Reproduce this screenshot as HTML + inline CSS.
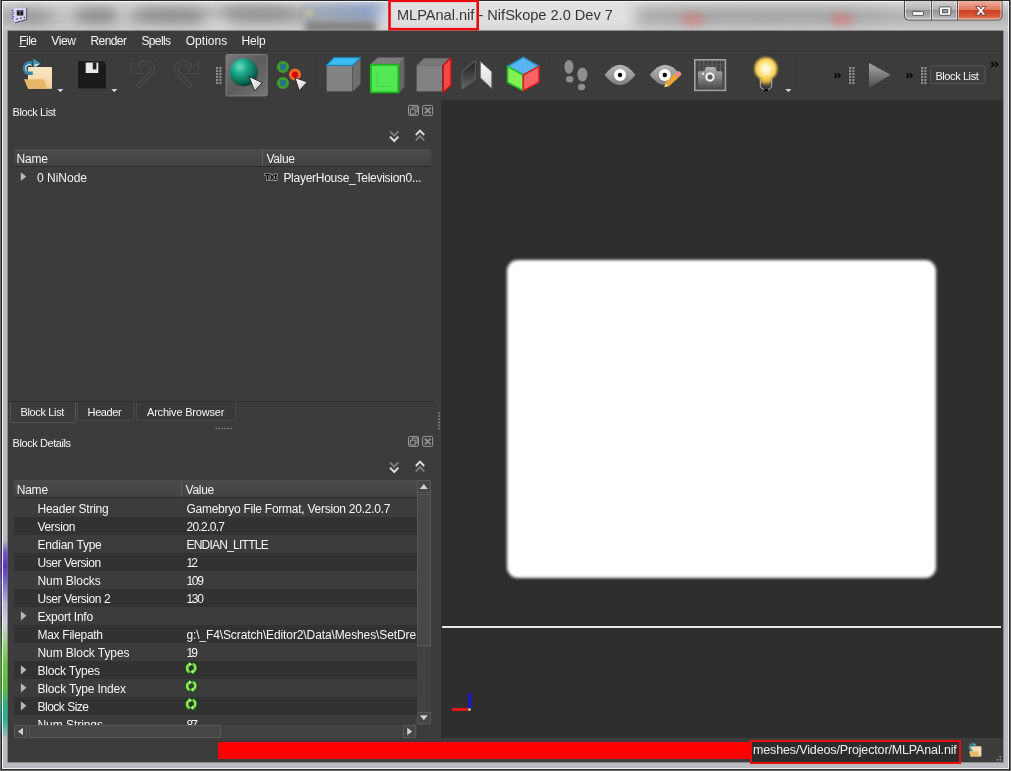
<!DOCTYPE html>
<html><head><meta charset="utf-8"><title>NifSkope</title>
<style>
html,body{margin:0;padding:0}
html{background:#6e6e6e}
body{width:1011px;height:771px;position:relative;overflow:hidden;background:#6e6e6e;font-family:"Liberation Sans",sans-serif}
.a{position:absolute}
.t{position:absolute;white-space:pre;line-height:1;font-family:"Liberation Sans",sans-serif}
.t u{text-decoration:underline;text-underline-offset:1px}
#ring1{left:1px;top:0;width:1009px;height:770.3px;background:#2a2a2a}
#ring2{left:2px;top:1px;width:1007px;height:768px;background:#f2f2f2}
#frame{left:3px;top:2px;width:1005px;height:766px;background:#babbbe;overflow:hidden}
#titlegrad{left:0;top:0;width:1005px;height:29px;background:linear-gradient(#dadada 0,#c6c6c6 18%,#b4b4b4 45%,#b8b8b8 65%,#c8c8c8 90%,#c4c4c4 100%)}
.blob{position:absolute;border-radius:50%;filter:blur(6px)}
#client{left:8px;top:30.7px;width:994.6px;height:731.6px;background:#3c3c3c;box-shadow:0 0 0 .6px #6a6a70}
#menubar{left:8px;top:31px;width:994.6px;height:19px;background:#3c3c3c}
#viewport{left:441px;top:100px;width:561.6px;height:638px;background:#2e2e2e}
.hdr{position:absolute;height:18px;background:linear-gradient(#4b4b4b,#434343);border-bottom:1px solid #2c2c2c;box-sizing:border-box}
.row{position:absolute;left:14px;width:403px;height:18px}
.dk{background:#323232}
.tab{position:absolute;box-sizing:border-box;border:1px solid #4b4b4b;border-top:none;border-radius:0 0 3px 3px;background:#393939}
.sb{position:absolute;background:#454545;box-sizing:border-box;border:1px solid #585858}
</style></head><body>
<div id="ring1" class="a"></div><div id="ring2" class="a"></div>
<div id="frame" class="a">
  <div id="titlegrad" class="a"></div>
  <div class="a" style="left:-2px;top:-1px;width:1009px;height:31px;overflow:hidden">
  
  <div class="blob" style="left:8px;top:6px;width:40px;height:20px;background:rgba(120,120,120,.35)"></div>
  <div class="blob" style="left:76px;top:6px;width:40px;height:16px;background:rgba(100,100,100,.45)"></div>
  <div class="blob" style="left:132px;top:5px;width:75px;height:17px;background:rgba(100,100,100,.42)"></div>
  <div class="blob" style="left:218px;top:3px;width:80px;height:16px;background:rgba(100,100,100,.42)"></div>
  <div class="blob" style="left:54px;top:8px;width:18px;height:14px;background:rgba(255,255,255,.3)"></div>
  <div class="blob" style="left:114px;top:8px;width:16px;height:14px;background:rgba(255,255,255,.3)"></div>
  <div class="blob" style="left:200px;top:14px;width:30px;height:16px;background:rgba(255,255,255,.3)"></div>
  <div class="blob" style="left:298px;top:1px;width:88px;height:18px;border-radius:6px;background:linear-gradient(to right,rgba(130,140,165,.35),rgba(100,140,212,.6));filter:blur(5px)"></div>
  <div class="blob" style="left:304px;top:21px;width:72px;height:10px;border-radius:4px;background:rgba(95,95,95,.7);filter:blur(3px)"></div>
  <div class="blob" style="left:304px;top:9px;width:8px;height:6px;background:rgba(220,215,140,.6);filter:blur(2px)"></div>
  <div class="blob" style="left:376px;top:2px;width:260px;height:26px;border-radius:13px;background:rgba(255,255,255,.62);filter:blur(7px)"></div>
  <div class="blob" style="left:640px;top:6px;width:250px;height:16px;background:rgba(110,110,110,.25);filter:blur(8px)"></div>
  <div class="blob" style="left:680px;top:13px;width:24px;height:11px;background:rgba(235,90,90,.5);filter:blur(5px)"></div>
  <div class="blob" style="left:829px;top:13px;width:24px;height:11px;background:rgba(235,90,90,.5);filter:blur(5px)"></div>
  </div>

</div>
<div class="a" style="left:3px;top:540px;width:5px;height:200px;background:linear-gradient(to bottom,rgba(189,189,193,0) 0,#7a5ad0 6%,#5a38c0 13%,#7860cc 20%,#b8b4dc 32%,#c8d0dc 42%,#a8d090 50%,#68c840 62%,#58c038 74%,#30b080 82%,#28b098 90%,rgba(189,189,193,0) 100%)"></div>
<div class="a" style="left:0;top:545px;width:2px;height:190px;opacity:.55;background:linear-gradient(to bottom,rgba(60,60,60,0) 0,#5a38c0 13%,#7860cc 20%,rgba(90,90,90,.3) 40%,#58c038 62%,#58c038 74%,#28b098 88%,rgba(60,60,60,0) 100%)"></div>
<div id="client" class="a"></div>
<div id="menubar" class="a"></div>
<div id="viewport" class="a"></div>

<!-- toolbar/menu separator -->
<div class="a" style="left:8px;top:50px;width:994.6px;height:1px;background:#363636"></div><div class="a" style="left:8px;top:54px;width:994.6px;height:1px;background:#393939"></div>
<!-- dock 1: Block List -->
<div class="hdr" style="left:14px;top:149px;width:417px"></div>
<div class="a" style="left:262px;top:149px;width:1px;height:17px;background:#5a5a5a"></div>
<!-- tab pane line -->
<div class="a" style="left:8px;top:401px;width:427px;height:1px;background:#2d2d2d"></div>
<div class="tab" style="left:10px;top:402px;width:65.5px;height:21px;background:#3c3c3c;border-color:#565656"></div>
<div class="tab" style="left:77px;top:402px;width:57px;height:18.5px"></div>
<div class="tab" style="left:136px;top:402px;width:100px;height:18.5px"></div>
<!-- dock 2 header -->
<div class="hdr" style="left:14px;top:480px;width:402.5px"></div>
<div class="a" style="left:181px;top:480px;width:1px;height:17px;background:#5a5a5a"></div>
<!-- rows -->
<div class="row dk" style="top:516.7px;height:18px;width:402.5px"></div>
<div class="row dk" style="top:552.7px;height:18px;width:402.5px"></div>
<div class="row dk" style="top:588.7px;height:18px;width:402.5px"></div>
<div class="row dk" style="top:624.7px;height:18px;width:402.5px"></div>
<div class="row dk" style="top:660.7px;height:18px;width:402.5px"></div>
<div class="row dk" style="top:696.7px;height:18px;width:402.5px"></div>
<!-- v scrollbar -->
<div class="a" style="left:417px;top:480px;width:13.5px;height:245px;background:#424242"></div>
<div class="sb" style="left:417px;top:480px;width:13.5px;height:13px"></div>
<div class="sb" style="left:417px;top:494px;width:13.5px;height:151.5px;background:#474747"></div>
<div class="sb" style="left:417px;top:711.5px;width:13.5px;height:12.5px"></div>
<!-- h scrollbar -->
<div class="a" style="left:14px;top:725px;width:402.5px;height:13px;background:#424242"></div>
<div class="sb" style="left:14px;top:725px;width:12.7px;height:13px"></div>
<div class="sb" style="left:28.6px;top:725px;width:192.6px;height:13px;background:#474747"></div>
<div class="sb" style="left:403px;top:725px;width:13px;height:13px"></div>
<!-- viewport contents -->
<div class="a" style="left:507.3px;top:259.8px;width:428.7px;height:318px;border-radius:11px;background:#fff;filter:blur(1.65px)"></div>
<div class="a" style="left:510.5px;top:263px;width:422.5px;height:311.5px;border-radius:8px;background:#fff"></div>
<div class="a" style="left:441.5px;top:626px;width:559.5px;height:2px;background:#e6e6e6"></div>
<div class="a" style="left:452px;top:708.3px;width:17.5px;height:2.6px;background:#e01818"></div>
<div class="a" style="left:468px;top:692.8px;width:3px;height:17px;background:#1818d8"></div>
<div class="a" style="left:468px;top:708px;width:3px;height:3px;border-radius:50%;background:#b8c850"></div>
<!-- status bar -->
<div class="a" style="left:217.7px;top:741.7px;width:534px;height:16.9px;background:#fe0000"></div>
<div class="a" style="left:749.5px;top:740.3px;width:211.8px;height:23.4px;box-sizing:border-box;border:2.6px solid #e80c0c;background:#2c2c2c"></div>

<!--BODY-->
<div class="a" style="left:0;top:0;width:416.5px;height:725px;overflow:hidden;will-change:transform;opacity:.999">
<span class="t" style="left:37.5px;top:503.1px;font-size:12px;letter-spacing:-0.237px;color:#f6f6f6;">Header String</span>
<span class="t" style="left:186.4px;top:503.1px;font-size:12px;letter-spacing:-0.255px;color:#f6f6f6;">Gamebryo File Format, Version 20.2.0.7</span>
<span class="t" style="left:37.5px;top:521.1px;font-size:12px;letter-spacing:-0.339px;color:#f6f6f6;">Version</span>
<span class="t" style="left:186.4px;top:521.1px;font-size:12px;letter-spacing:-0.682px;color:#f6f6f6;">20.2.0.7</span>
<span class="t" style="left:37.5px;top:539.1px;font-size:12px;letter-spacing:-0.220px;color:#f6f6f6;">Endian Type</span>
<span class="t" style="left:186.4px;top:539.1px;font-size:12px;letter-spacing:-0.755px;color:#f6f6f6;">ENDIAN_LITTLE</span>
<span class="t" style="left:37.5px;top:557.1px;font-size:12px;letter-spacing:-0.455px;color:#f6f6f6;">User Version</span>
<span class="t" style="left:186.4px;top:557.1px;font-size:12px;letter-spacing:-1.759px;color:#f6f6f6;">12</span>
<span class="t" style="left:37.5px;top:575.1px;font-size:12px;letter-spacing:-0.080px;color:#f6f6f6;">Num Blocks</span>
<span class="t" style="left:186.4px;top:575.1px;font-size:12px;letter-spacing:-1.266px;color:#f6f6f6;">109</span>
<span class="t" style="left:37.5px;top:593.1px;font-size:12px;letter-spacing:-0.423px;color:#f6f6f6;">User Version 2</span>
<span class="t" style="left:186.4px;top:593.1px;font-size:12px;letter-spacing:-1.266px;color:#f6f6f6;">130</span>
<span class="t" style="left:37.5px;top:611.1px;font-size:12px;letter-spacing:-0.243px;color:#f6f6f6;">Export Info</span>
<span class="t" style="left:37.5px;top:629.1px;font-size:12px;letter-spacing:-0.291px;color:#f6f6f6;">Max Filepath</span>
<span class="t" style="left:186.4px;top:629.1px;font-size:12px;letter-spacing:-0.110px;color:#f6f6f6;">g:\_F4\Scratch\Editor2\Data\Meshes\SetDre</span>
<span class="t" style="left:37.5px;top:647.1px;font-size:12px;letter-spacing:-0.083px;color:#f6f6f6;">Num Block Types</span>
<span class="t" style="left:186.4px;top:647.1px;font-size:12px;letter-spacing:-1.759px;color:#f6f6f6;">19</span>
<span class="t" style="left:37.5px;top:665.1px;font-size:12px;letter-spacing:-0.208px;color:#f6f6f6;">Block Types</span>
<span class="t" style="left:37.5px;top:683.1px;font-size:12px;letter-spacing:-0.171px;color:#f6f6f6;">Block Type Index</span>
<span class="t" style="left:37.5px;top:701.1px;font-size:12px;letter-spacing:-0.503px;color:#f6f6f6;">Block Size</span>
<span class="t" style="left:37.5px;top:719.1px;font-size:12px;letter-spacing:-0.053px;color:#f6f6f6;">Num Strings</span>
<span class="t" style="left:186.4px;top:719.1px;font-size:12px;letter-spacing:-1.759px;color:#f6f6f6;">87</span>
</div>
<svg class="a" style="left:0;top:0" width="1011" height="771" viewBox="0 0 1011 771">
<defs>
  <linearGradient id="gFolderBack" x1="0" y1="0" x2="0" y2="1"><stop offset="0" stop-color="#fbe6c4"/><stop offset="1" stop-color="#f4d3a0"/></linearGradient>
  <radialGradient id="gSphere" cx="0.36" cy="0.3" r="0.75"><stop offset="0" stop-color="#6adcbc"/><stop offset="0.35" stop-color="#1aaa8a"/><stop offset="0.75" stop-color="#0c6a55"/><stop offset="1" stop-color="#053a2e"/></radialGradient>
  <linearGradient id="gBtn" x1="0" y1="0" x2="1" y2="1"><stop offset="0" stop-color="#7a7a7a"/><stop offset="0.5" stop-color="#5c5c5c"/><stop offset="1" stop-color="#767676"/></linearGradient>
  <linearGradient id="gCur" x1="0" y1="0" x2="1" y2="1"><stop offset="0" stop-color="#ffffff"/><stop offset="1" stop-color="#c8c8c8"/></linearGradient>
  <linearGradient id="gDarkPane" x1="0" y1="0" x2="0" y2="1"><stop offset="0" stop-color="#1c1c1c"/><stop offset="1" stop-color="#666"/></linearGradient>
  <linearGradient id="gLightPane" x1="0" y1="0" x2="0" y2="1"><stop offset="0" stop-color="#ffffff"/><stop offset="1" stop-color="#d0d0d0"/></linearGradient>
  <linearGradient id="gEye" x1="0" y1="0" x2="0" y2="1"><stop offset="0" stop-color="#b8b8b8"/><stop offset="1" stop-color="#7e7e7e"/></linearGradient>
  <linearGradient id="gCam" x1="0" y1="0" x2="0" y2="1"><stop offset="0" stop-color="#b4b4b4"/><stop offset="1" stop-color="#4e4e4e"/></linearGradient>
  <linearGradient id="gPlay" x1="0" y1="0" x2="0" y2="1"><stop offset="0" stop-color="#a8a8a8"/><stop offset="1" stop-color="#4c4c4c"/></linearGradient>
  <radialGradient id="gBulb" cx="0.5" cy="0.5" r="0.5"><stop offset="0" stop-color="#ffffff"/><stop offset="0.3" stop-color="#fff4cc"/><stop offset="0.62" stop-color="#fee07a"/><stop offset="0.88" stop-color="#f9cc4e"/><stop offset="1" stop-color="#e4ac28" stop-opacity="0.75"/></radialGradient>
  <linearGradient id="gNeck" x1="0" y1="0" x2="0" y2="1"><stop offset="0" stop-color="#fdd560"/><stop offset="0.55" stop-color="#f6c64a"/><stop offset="1" stop-color="#8a7a40" stop-opacity="0.2"/></linearGradient>
  <filter id="b3" x="-20%" y="-20%" width="140%" height="140%"><feGaussianBlur stdDeviation="0.9"/></filter>
  <linearGradient id="gMin" x1="0" y1="0" x2="0" y2="1"><stop offset="0" stop-color="#d2d2d4"/><stop offset="0.45" stop-color="#b2b2b5"/><stop offset="0.5" stop-color="#939396"/><stop offset="1" stop-color="#bebec1"/></linearGradient>
  <linearGradient id="gClose" x1="0" y1="0" x2="0" y2="1"><stop offset="0" stop-color="#eeb0a0"/><stop offset="0.45" stop-color="#e07860"/><stop offset="0.5" stop-color="#cc4028"/><stop offset="0.8" stop-color="#d85a38"/><stop offset="1" stop-color="#e88a68"/></linearGradient>
  <filter id="b1"><feGaussianBlur stdDeviation="0.5"/></filter>
  <filter id="b2"><feGaussianBlur stdDeviation="0.35"/></filter>
<g id="grip"><rect x="0" y="0" width="2.2" height="2.2"/><rect x="3.3" y="0" width="2.2" height="2.2"/><rect x="0" y="3" width="2.2" height="2.2"/><rect x="3.3" y="3" width="2.2" height="2.2"/><rect x="0" y="6" width="2.2" height="2.2"/><rect x="3.3" y="6" width="2.2" height="2.2"/><rect x="0" y="9" width="2.2" height="2.2"/><rect x="3.3" y="9" width="2.2" height="2.2"/><rect x="0" y="12" width="2.2" height="2.2"/><rect x="3.3" y="12" width="2.2" height="2.2"/><rect x="0" y="15" width="2.2" height="2.2"/><rect x="3.3" y="15" width="2.2" height="2.2"/></g>
</defs>

<!-- ============ toolbar: file group ============ -->
<g id="ic-open">
  <path d="M28 67 h23 a1 1 0 0 1 1 1 V87.8 a1 1 0 0 1 -1 1 H28z" fill="url(#gFolderBack)"/>
  <path d="M24 79.2 H43.7 L47.6 88.8 H28z" fill="#e8b566"/>
  <path d="M43.7 79.2 L47.6 88.8 H51 a1 1 0 0 0 1-1 L47.4 79.2z" fill="#f3cf98" opacity=".6"/>
  <path d="M32 63.2 A5.4 5.4 0 1 0 28.2 73.3 H32.8" fill="none" stroke="#3486a4" stroke-width="3.4"/>
  <path d="M31.6 65.6 A3.2 3.2 0 0 0 27 71" fill="none" stroke="#c4e6f2" stroke-width="1.3"/>
  <path d="M33 58.6 L40.8 63.4 L33.6 67.6z" fill="#3f98b8"/>
  <path d="M34.4 64.6 L40 63.8 L35 67z" fill="#d8eef6"/>
</g>
<path d="M57.3 89 h6 l-3 3.2z" fill="#d6d6d6"/>
<g id="ic-save">
  <path d="M78 61 H103.5 L106 63.5 V88.6 H78z" fill="#1b1b1b"/>
  <rect x="85.7" y="62.6" width="12.6" height="10.4" fill="#e9e9e9"/>
  <rect x="92.8" y="62.6" width="3.6" height="6.8" fill="#1b1b1b"/>
</g>
<path d="M111.3 89 h6 l-3 3.2z" fill="#d6d6d6"/>
<!-- undo / redo (disabled, faint) -->
<g id="ic-undo" fill="none" stroke-linecap="round" stroke-linejoin="round">
  <g id="undo1">
  <path d="M139 85.6 L150.8 73.6 A6.7 6.7 0 1 0 139.4 68.4" stroke="#4e4e4e" stroke-width="4.6"/>
  <path d="M131.2 62.2 V73.6 H142.6z" fill="#3c3c3c" stroke="#4e4e4e" stroke-width="1"/>
  <path d="M139 85.6 L150.8 73.6 A6.7 6.7 0 1 0 139.4 68.4 L138 69.6" stroke="#3c3c3c" stroke-width="2.6"/>
  </g>
  <use href="#undo1" transform="translate(329.3,0) scale(-1,1)"/>
</g>
<!-- grips -->

<use href="#grip" x="216" y="67" fill="#8c8c8c"/>
<use href="#grip" x="849" y="67" fill="#8c8c8c"/>
<use href="#grip" x="921" y="67" fill="#8c8c8c"/>
<!-- selected sphere button -->
<rect x="226" y="54.5" width="41.2" height="41.5" rx="1.5" fill="url(#gBtn)" stroke="#8a8a8a" stroke-width="0.8"/>
<circle cx="243.8" cy="72.3" r="14" fill="url(#gSphere)"/>
<path d="M249 76.5 L262.3 82.6 L254.6 91z" fill="url(#gCur)" stroke="#2a2a2a" stroke-width="1" stroke-linejoin="round"/>
<!-- vertices select -->
<g>
  <circle cx="283" cy="67" r="4.6" fill="#24728e" stroke="#409f2c" stroke-width="2.8"/>
  <circle cx="283" cy="83" r="4.6" fill="#24728e" stroke="#409f2c" stroke-width="2.8"/>
  <circle cx="295" cy="74.6" r="4.6" fill="#d80808" stroke="#f06a20" stroke-width="2.8"/>
  <path d="M295 77.7 L307.4 81.9 L299.2 90.8z" fill="url(#gCur)" stroke="#2a2a2a" stroke-width="1" stroke-linejoin="round"/>
</g>
<!-- separators -->
<g stroke="#383838" stroke-width="1"><path d="M317.5 58V92M550.5 58V92M737.5 58V92M797.5 58V92"/></g>
<g stroke="#3f3f3f" stroke-width="1"><path d="M318.5 58V92M551.5 58V92M738.5 58V92M798.5 58V92"/></g>
<!-- cube top -->
<g>
  <path d="M326.6 65.8 H352.3 V91.4 H326.6z" fill="#828282"/>
  <path d="M352.8 65.8 L360.5 58 V84 L352.8 91.4z" fill="#6e6e6e"/>
  <path d="M326.4 65.4 L334 57.6 H360.6 L352.6 65.4z" fill="#3cbcf4" stroke="#1a86b8" stroke-width="1.2" stroke-linejoin="round"/>
</g>
<!-- cube front -->
<g>
  <path d="M370.5 64 L378 57.6 H404.4 L399 64z" fill="#7c7c7c"/>
  <path d="M399 64 L404.4 57.6 V86.8 L399 93z" fill="#666"/>
  <rect x="370.8" y="64.8" width="27.6" height="27.6" fill="#52e852" stroke="#1bb41b" stroke-width="1.8"/>
  <path d="M377 71 V86.5 H392.5" fill="none" stroke="#46d846" stroke-width="1"/>
</g>
<!-- cube side -->
<g>
  <path d="M416.6 65.4 H442.2 V91.4 H416.6z" fill="#828282"/>
  <path d="M416.6 65.4 L424 58.2 H449.6 L442.2 65.4z" fill="#787878"/>
  <path d="M443.2 65.6 L451 57.8 V85 L443.2 92.4z" fill="#f24848" stroke="#c41414" stroke-width="1.4" stroke-linejoin="round"/>
</g>
<!-- flip normals -->
<g>
  <path d="M462 71.3 L475.3 60.8 V79.3 L462 89.3z" fill="url(#gDarkPane)" stroke="#5c5c5c" stroke-width="1.2" stroke-linejoin="round"/>
  <path d="M480.3 61.3 L491.8 71.8 V88.7 L480.3 77.8z" fill="url(#gLightPane)" stroke="#6a6a6a" stroke-width="1" stroke-linejoin="round"/>
</g>
<!-- rgb cube -->
<g stroke-linejoin="round" stroke-width="1.6">
  <path d="M523.3 57.4 L539 66.4 L523.3 75 L507.6 66.4z" fill="#58b4f2" stroke="#2490c4"/>
  <path d="M507.6 66.4 L523.3 75 V90.6 L507.6 82.3z" fill="#84f054" stroke="#22c222"/>
  <path d="M539 66.4 L523.3 75 V90.6 L539 82.3z" fill="#f86262" stroke="#d22020"/>
</g>
</svg>

<svg class="a" style="left:0;top:0" width="1011" height="771" viewBox="0 0 1011 771">
<!-- footsteps -->
<g fill="#8e8e8e">
  <ellipse cx="568.9" cy="66.8" rx="4.5" ry="6.9"/>
  <ellipse cx="569.7" cy="79.2" rx="3.7" ry="3.3"/>
  <ellipse cx="582.4" cy="74.5" rx="5" ry="6.9"/>
  <ellipse cx="581.6" cy="87" rx="3.6" ry="3.3"/>
</g>
<!-- eye 1 -->
<g>
  <path d="M604.6 75 Q620 54.5 635.4 75 Q620 95 604.6 75z" fill="url(#gEye)"/>
  <circle cx="620" cy="75" r="6" fill="#fff"/><circle cx="620" cy="75" r="2.2" fill="#050505"/>
</g>
<!-- eye 2 with pencil -->
<g>
  <path d="M649.8 75 Q665 54.5 680.4 75 Q665 95 649.8 75z" fill="url(#gEye)"/>
  <circle cx="664.8" cy="75" r="6" fill="#fff"/><circle cx="664.8" cy="75" r="2.2" fill="#050505"/>
  <g transform="translate(664.3,87.3) rotate(-43)">
    <path d="M0 0 L4.2 -2.5 V2.5z" fill="#f2d66a"/>
    <rect x="4.2" y="-2.5" width="13.2" height="5" fill="#f2a32e"/>
    <path d="M17.4 -2.5 h3 a1.6 1.6 0 0 1 1.6 1.6 v1.8 a1.6 1.6 0 0 1 -1.6 1.6 h-3z" fill="#f38a9a"/>
  </g>
</g>
<!-- camera/screenshot -->
<g>
  <rect x="694.8" y="59.8" width="30.6" height="30.6" fill="#454545" stroke="#a2a2a2" stroke-width="1.6"/>
  <g stroke="#5e5e5e" stroke-width="1.2"><path d="M699.5 61V90M703.7 61V90M707.9 61V90M712.1 61V90M716.3 61V90M720.5 61V90"/><path d="M696 65H725M696 86H725" stroke="#555"/></g>
  <path d="M698 72.2 a1 1 0 0 1 1 -1 H704.4 L705.6 67.8 a1 1 0 0 1 1 -.8 h7.8 a1 1 0 0 1 1 .8 L716.6 71.2 H721.4 a1 1 0 0 1 1 1 V88.5 H698z" fill="url(#gCam)"/>
  <circle cx="710" cy="77" r="3.7" fill="none" stroke="#fff" stroke-width="1.8"/>
  <rect x="708.2" y="75.2" width="3.6" height="3.6" fill="#555"/>
  <rect x="702.2" y="72.8" width="1.8" height="1.8" fill="#fff"/>
</g>
<!-- bulb -->
<g>
  <g filter="url(#b3)">
    <path d="M760.8 75 V83.5 Q766 88.5 771.2 83.5 V75z" fill="url(#gNeck)"/>
    <circle cx="765.9" cy="68.8" r="11.7" fill="url(#gBulb)"/>
  </g>
  <path d="M760.3 79 V85.6 Q760.5 88.6 763.8 89.6 M771.7 79 V85.6 Q771.5 88.6 768.2 89.6" fill="none" stroke="#c2c2c2" stroke-width="0.9"/>
  <rect x="764" y="89" width="4" height="2.2" fill="#050505"/>
</g>
<path d="M785.4 89 h6 l-3 3.2z" fill="#d6d6d6"/>
<!-- chevrons >> -->
<g fill="none" stroke="#0a0a0a" stroke-width="1.5">
  <path d="M834.6 73.2 L837 75.4 L834.6 77.6M838 73.2 L840.4 75.4 L838 77.6"/>
  <path d="M906.6 73.2 L909 75.4 L906.6 77.6M910 73.2 L912.4 75.4 L910 77.6"/>
  <path d="M991 61.8 L993.8 64.4 L991 67M995 61.8 L997.8 64.4 L995 67" stroke-width="1.6"/>
</g>
<!-- play -->
<path d="M869 63 L890.7 74.8 L869 87.9z" fill="url(#gPlay)"/>
<!-- Block List toolbar button -->
<rect x="930.5" y="65.8" width="54.5" height="17.8" rx="2.5" fill="#3e3e3e" stroke="#5a5a5a" stroke-width="1"/>

<!-- dock float/close buttons -->
<g id="dockbtns" fill="none" stroke="#9a9a9a" stroke-width="1">
  <rect x="408.5" y="105.4" width="10" height="10" rx="1.5"/>
  <rect x="412.4" y="107" width="4.8" height="4.8"/>
  <rect x="410.4" y="109.2" width="4.8" height="4.8" fill="#3c3c3c"/>
  <rect x="422.6" y="105.4" width="10" height="10" rx="1.5"/>
  <path d="M424.8 107.6 L430.6 113.4M430.6 107.6 L424.8 113.4" stroke-width="2" stroke="#909090"/>
</g>
<use href="#dockbtns" y="331"/>
<!-- double chevrons -->
<g id="chev" fill="none" stroke-linejoin="miter" stroke-width="2">
  <path d="M390 131.4 L394.2 135.6 L398.4 131.4" stroke="#7c7c7c"/>
  <path d="M390 136.6 L394.2 141 L398.4 136.6" stroke="#dcdcdc"/>
  <path d="M415.8 135 L420 130.6 L424.2 135" stroke="#dcdcdc"/>
  <path d="M415.8 140.4 L420 136 L424.2 140.4" stroke="#7c7c7c"/>
</g>
<use href="#chev" y="331"/>
<!-- tree arrows -->
<g fill="#b9b9b9">
  <path d="M20.8 172.2 L26.2 176.6 L20.8 181z"/>
  <path id="arr" d="M20.9 0 L26.4 4.6 L20.9 9.2z" transform="translate(0,611.2)"/>
  <path d="M20.9 0 L26.4 4.6 L20.9 9.2z" transform="translate(0,665.2)"/>
  <path d="M20.9 0 L26.4 4.6 L20.9 9.2z" transform="translate(0,683.2)"/>
  <path d="M20.9 0 L26.4 4.6 L20.9 9.2z" transform="translate(0,701.2)"/>
</g>
<!-- Txt icon -->
<g font-family="Liberation Sans, sans-serif" font-weight="bold" font-size="9px" letter-spacing="-0.5">
  <text x="264.8" y="179.8" stroke="#c8c8c8" stroke-width="1.5" stroke-linejoin="round" fill="#c8c8c8">Txt</text>
  <text x="264.8" y="179.8" fill="#050505" stroke="#050505" stroke-width=".3">Txt</text>
</g>
<!-- green refresh icons -->
<defs>
<g id="refresh">
  <g id="rfh">
    <path d="M5.7 2.9 A3.5 3.9 0 0 0 5.3 10.6" fill="none" stroke="#0e560e" stroke-width="4.2"/>
    <path d="M3.6 -0.4 L8.6 2.9 L4.2 6.2z" fill="#0e560e"/>
    <path d="M5.7 2.9 A3.5 3.9 0 0 0 5.3 10.6" fill="none" stroke="#7ad84a" stroke-width="2.6"/>
    <path d="M4.3 0.7 L7.6 2.9 L4.7 5.2z" fill="#b4f48c"/>
    <path d="M3.2 4.2 A3.4 3.8 0 0 0 3.2 9" fill="none" stroke="#a4ec78" stroke-width="1.1"/>
  </g>
  <use href="#rfh" transform="rotate(180 6.6 6.6)"/>
</g>
</defs>
<use href="#refresh" x="184.6" y="661.4"/>
<use href="#refresh" x="184.6" y="679.4"/>
<use href="#refresh" x="184.6" y="697.4"/>
<!-- scrollbar arrows -->
<g fill="#cfcfcf">
  <path d="M419.8 489 L423.8 484 L427.8 489z"/>
  <path d="M419.8 715.2 L423.8 720.2 L427.8 715.2z"/>
  <path d="M23 727.8 L18 731.5 L23 735.2z"/>
  <path d="M407.2 727.8 L412.2 731.5 L407.2 735.2z"/>
</g>
<!-- splitter dots -->
<g fill="#8a8a8a">
  <rect x="215.4" y="427.8" width="1.6" height="1.3"/><rect x="218.4" y="427.8" width="1.6" height="1.3"/><rect x="221.4" y="427.8" width="1.6" height="1.3"/><rect x="224.4" y="427.8" width="1.6" height="1.3"/><rect x="227.4" y="427.8" width="1.6" height="1.3"/><rect x="230.4" y="427.8" width="1.6" height="1.3"/>
  <rect x="438.2" y="412.2" width="1.6" height="1.6"/><rect x="438.2" y="415.3" width="1.6" height="1.6"/><rect x="438.2" y="418.4" width="1.6" height="1.6"/><rect x="438.2" y="421.5" width="1.6" height="1.6"/><rect x="438.2" y="424.6" width="1.6" height="1.6"/><rect x="438.2" y="427.7" width="1.6" height="1.6"/>
</g>
<!-- status folder icon -->
<g>
  <rect x="970.4" y="746.2" width="11" height="10.2" rx=".6" fill="#f6dbb0"/>
  <path d="M969 751.6 H978 L979.8 756.4 H970.6z" fill="#e8b768"/>
  <path d="M975.4 745.6 A3.2 3.2 0 1 0 972.6 750.4" fill="none" stroke="#3a8ba9" stroke-width="1.7"/>
  <path d="M973 742.8 L976.6 744.6 L973.4 746.8z" fill="#4aa3c2"/>
</g>
<!-- size grip -->
<g fill="#8a8a8a"><rect x="999.5" y="756" width="1.7" height="1.7"/><rect x="996.5" y="759" width="1.7" height="1.7"/><rect x="999.5" y="759" width="1.7" height="1.7"/></g>

<!-- window buttons -->
<g>
  <path d="M904.5 1 V16 a4 4 0 0 0 4 4 H998 a4 4 0 0 0 4 -4 V1z" fill="url(#gMin)"/>
  <path d="M957.5 1 V20 H998 a4 4 0 0 0 4 -4 V1z" fill="url(#gClose)"/>
  <path d="M904.5 1 V16 a4 4 0 0 0 4 4 H998 a4 4 0 0 0 4 -4 V1" fill="none" stroke="#4a4a4a" stroke-width="1"/>
  <path d="M905.5 1.5 V16 a3 3 0 0 0 3 3 H998 a3 3 0 0 0 3 -3 V1.5" fill="none" stroke="#fff" stroke-opacity=".6" stroke-width="1"/>
  <path d="M931.5 1 V20M957.5 1 V20" stroke="#505050" stroke-width="1"/>
  <path d="M932.5 1.5 V19M958.5 1.5 V19M930.5 1.5V19M956.5 1.5V19" stroke="#fff" stroke-opacity=".5" stroke-width="1"/>
  <!-- min -->
  <rect x="912.4" y="11.6" width="11.2" height="3.8" rx=".6" fill="#fff" stroke="#4c4c4c" stroke-width=".9"/>
  <!-- max -->
  <rect x="939.4" y="6.9" width="11.4" height="8.4" rx=".6" fill="#fff" stroke="#4c4c4c" stroke-width=".9"/>
  <rect x="942.4" y="9.6" width="5.4" height="3.2" fill="#9a9ca0" stroke="#4c4c4c" stroke-width=".9"/>
  <!-- close X -->
  <path d="M975.6 6.4 h3.4 l1.8 2.6 l1.8 -2.6 h3.4 l-3.4 4.4 l3.4 4.4 h-3.4 l-1.8 -2.6 l-1.8 2.6 h-3.4 l3.4 -4.4z" fill="#fff" stroke="#5a2a22" stroke-width=".8" stroke-linejoin="round"/>
</g>
<!-- app icon -->
<g filter="url(#b2)">
  <path d="M14 7.8 L26.4 8.2 V19.4 L15 22.5 L14 21.8z" fill="#d8d4ef"/>
  <path d="M11.3 9.2 L14 7.8 V21.8 L11.3 20.2z" fill="#b9b5d8"/>
  <g fill="#4a4670"><rect x="11.6" y="10" width="1.2" height="1.2"/><rect x="12.6" y="12" width="1.2" height="1.2"/><rect x="11.6" y="14" width="1.2" height="1.2"/><rect x="12.6" y="16" width="1.2" height="1.2"/><rect x="11.6" y="18" width="1.2" height="1.2"/></g>
  <path d="M26.7 8.2 V19.6 L15 22.8" fill="none" stroke="#5a5872" stroke-width="1.1"/>
  <rect x="16.8" y="10.1" width="6.5" height="5.4" fill="#121212"/>
  <rect x="19.5" y="10.1" width="1" height="5.4" fill="#6f7f78"/>
  <rect x="16.8" y="10.1" width="6.5" height="1.6" fill="#8a8aa0" opacity=".55"/>
  <g fill="#5a4a7a"><circle cx="17.1" cy="18.9" r=".85"/><circle cx="20.8" cy="18.2" r=".85"/><circle cx="24.4" cy="17.4" r=".85"/></g>
</g>
<!-- title red box -->
<rect x="389.5" y="0.8" width="88.2" height="28.4" fill="none" stroke="#e80c0c" stroke-width="2.6"/>
</svg>

<div class="a" style="left:0;top:0;width:1011px;height:771px;will-change:transform;opacity:.999">
<span class="t" style="left:396.9px;top:8.4px;font-size:14.6px;letter-spacing:-0.010px;color:#363636;">MLPAnal.nif - NifSkope 2.0 Dev 7</span>
<span class="t" style="left:19.3px;top:34.6px;font-size:12px;letter-spacing:-0.548px;color:#f6f6f6;"><u>F</u>ile</span>
<span class="t" style="left:51.2px;top:34.6px;font-size:12px;letter-spacing:-0.332px;color:#f6f6f6;">View</span>
<span class="t" style="left:90.5px;top:34.6px;font-size:12px;letter-spacing:-0.592px;color:#f6f6f6;">Render</span>
<span class="t" style="left:141.4px;top:34.6px;font-size:12px;letter-spacing:-0.617px;color:#f6f6f6;">Spells</span>
<span class="t" style="left:185.7px;top:34.6px;font-size:12px;letter-spacing:0.040px;color:#f6f6f6;">Options</span>
<span class="t" style="left:241.5px;top:34.6px;font-size:12px;letter-spacing:-0.196px;color:#f6f6f6;">Help</span>
<span class="t" style="left:935.4px;top:70.6px;font-size:11px;letter-spacing:-0.409px;color:#f6f6f6;">Block List</span>
<span class="t" style="left:12.5px;top:106.8px;font-size:11px;letter-spacing:-0.420px;color:#f6f6f6;">Block List</span>
<span class="t" style="left:16.6px;top:152.6px;font-size:12px;letter-spacing:-0.205px;color:#f6f6f6;">Name</span>
<span class="t" style="left:266.4px;top:152.6px;font-size:12px;letter-spacing:-0.303px;color:#f6f6f6;">Value</span>
<span class="t" style="left:37.0px;top:171.6px;font-size:12px;letter-spacing:-0.004px;color:#f6f6f6;">0 NiNode</span>
<span class="t" style="left:283.4px;top:171.6px;font-size:12px;letter-spacing:-0.270px;color:#f6f6f6;">PlayerHouse_Television0...</span>
<span class="t" style="left:20.4px;top:407.4px;font-size:11px;letter-spacing:-0.342px;color:#f6f6f6;">Block List</span>
<span class="t" style="left:87.6px;top:406.7px;font-size:11px;letter-spacing:-0.396px;color:#f6f6f6;">Header</span>
<span class="t" style="left:147.0px;top:406.7px;font-size:11px;letter-spacing:-0.191px;color:#f6f6f6;">Archive Browser</span>
<span class="t" style="left:12.5px;top:437.6px;font-size:11px;letter-spacing:-0.423px;color:#f6f6f6;">Block Details</span>
<span class="t" style="left:16.7px;top:483.5px;font-size:12px;letter-spacing:-0.205px;color:#f6f6f6;">Name</span>
<span class="t" style="left:185.6px;top:483.5px;font-size:12px;letter-spacing:-0.303px;color:#f6f6f6;">Value</span>
<span class="t" style="left:753.0px;top:744.4px;font-size:12.5px;letter-spacing:-0.143px;color:#f0f0f0;">meshes/Videos/Projector/MLPAnal.nif</span>
</div>
</body></html>
